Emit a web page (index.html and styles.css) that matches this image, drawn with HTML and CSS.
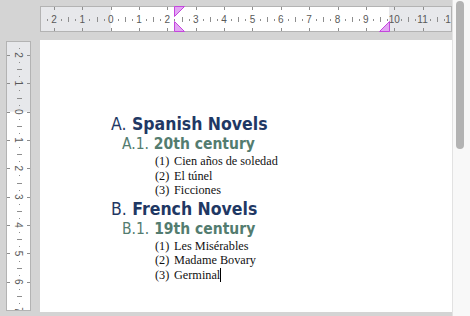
FILE: index.html
```html
<!DOCTYPE html>
<html>

<head>
  <meta charset="utf-8" />
  <title>Outline</title>
  <meta name="viewport" content="width=device-width, initial-scale=1">
  <link rel="stylesheet" href="styles.css">
</head>

<body>
  <section class="app">
    <section class="workspace">
      <div class="ruler ruler-top" id="hruler"></div>
      <div class="ruler ruler-left" id="vruler"></div>
      <article class="page">
        <h1 class="h1"><span class="num">A.</span> Spanish Novels</h1>
        <h2 class="h2"><span class="num">A.1.</span> 20th century</h2>
        <ul class="items">
          <li><span class="n">(1)</span>Cien años de soledad</li>
          <li><span class="n">(2)</span>El túnel</li>
          <li><span class="n">(3)</span>Ficciones</li>
        </ul>
        <h1 class="h1 next"><span class="num">B.</span> French Novels</h1>
        <h2 class="h2"><span class="num">B.1.</span> 19th century</h2>
        <ul class="items">
          <li><span class="n">(1)</span>Les Misérables</li>
          <li><span class="n">(2)</span>Madame Bovary</li>
          <li><span class="n">(3)</span>Germinal<span class="caret"></span></li>
        </ul>
      </article>
      <div class="hscroll"></div>
    </section>
    <aside class="vscroll"><div class="thumb"></div></aside>
  </section>
  <script>
    var $ = (selector, container = document) => container.querySelector(selector);
    (() => {
      const unit = 28.35, origin = 70.7;
      const px = v => Math.round(v) + .5;

      // one ruler, drawn along x; the left one is the same thing turned round
      const ruler = (length, depth, marginEnd, vertical) => {
        const at = (a, b) => vertical ? `x="${b}" y="${a}"` : `x="${a}" y="${b}"`;
        const line = (a, b1, b2) => vertical
          ? `<line x1="${b1}" x2="${b2}" y1="${a}" y2="${a}"/>`
          : `<line x1="${a}" x2="${a}" y1="${b1}" y2="${b2}"/>`;
        const rect = (a, len, fill) => vertical
          ? `<rect x="0" y="${a}" width="${depth}" height="${len}" fill="${fill}"/>`
          : `<rect x="${a}" y="0" width="${len}" height="${depth}" fill="${fill}"/>`;
        const mid = depth / 2;
        let ticks = '', nums = '';
        for (let k = -12; k <= 60; k++) {
          const pos = origin + k * unit / 4;
          if (pos < 1 || pos > length) continue;
          const p = px(pos);
          if (k % 4 === 0) {
            ticks += line(p, 0, 4) + line(p, depth - 4, depth);
            const label = Math.abs(k / 4);
            const c = vertical ? [mid, pos] : [pos, mid];
            const turn = vertical ? ` transform="rotate(90 ${c[0]} ${c[1]})"` : '';
            nums += `<text x="${c[0]}" y="${c[1]}"${turn}>${label}</text>`;
          } else if (Math.abs(k % 4) === 2) {
            ticks += line(p, mid - 2, mid + 3);
          } else {
            ticks += line(p, mid, mid + 1.5);
          }
        }
        const w = vertical ? depth : length, h = vertical ? length : depth;
        return `<svg width="${w}" height="${h}" viewBox="0 0 ${w} ${h}">
          ${rect(0, length, '#e7e8eb')}
          ${rect(origin, marginEnd - origin, '#fff')}
          <g class="ticks">${ticks}</g>
          <g class="nums">${nums}</g>
          <rect class="edge" x=".5" y=".5" width="${w - 1}" height="${h - 1}"/>
          ${vertical ? '' : `<g class="marker">
            <polygon points="134.5,.5 144.5,.5 134.5,10.5"/>
            <polygon points="134.5,15.5 134.5,25.5 144.5,25.5"/>
            <polygon points="349.5,15.5 349.5,25.5 339.5,25.5"/>
          </g>`}
        </svg>`;
      };

      $('#hruler').innerHTML = ruler(412, 26, 349, false);
      $('#vruler').innerHTML = ruler(270, 25, 270, true);
    })();
  </script>
</body>

</html>
```

FILE: styles.css
```css
* { box-sizing: border-box; margin: 0; padding: 0; }
html, body { height: 100%; }
body {
  background: #d4d4d4;
  overflow: hidden;
}
.app {
  display: flex;
  height: 316px;
}
.workspace {
  display: grid;
  grid-template-columns: 25px 412px;
  grid-template-rows: 26px 272px 4px;
  column-gap: 9px;
  row-gap: 8px;
  padding: 6px 0 0 6px;
  width: 452px;
}
.ruler svg { display: block; }
.ruler-top { grid-column: 2; grid-row: 1; }
.ruler-left { grid-column: 1; grid-row: 2; margin-top: 1px; }
.ticks line { stroke: #8e8e8e; stroke-width: 1; shape-rendering: crispEdges; }
.nums text {
  font: 10px "Liberation Sans", Arial, sans-serif;
  fill: #595959;
  text-anchor: middle;
  dominant-baseline: central;
}
.edge { fill: none; stroke: #b3b3b3; shape-rendering: crispEdges; }
.marker polygon { fill: #e2a6f3; stroke: #c446dd; stroke-width: 1; }
.page {
  grid-column: 2;
  grid-row: 2;
  background: #fff;
  padding: 74px 0 0 71px;
}
.hscroll {
  grid-column: 1 / 3;
  grid-row: 3;
  margin: -8px 0 0 -6px;
  height: 4px;
  align-self: end;
  background: #eaeaea;
}
.h1, .h2 {
  font-family: "DejaVu Sans Condensed", "DejaVu Sans", sans-serif;
  font-stretch: condensed;
  font-weight: bold;
}
.h1 {
  font-size: 17.5px;
  line-height: 21px;
  color: #1f3864;
}
.h1.next { margin-top: 1px; }
.h2 {
  font-size: 15.5px;
  line-height: 19px;
  color: #537c6f;
  padding-left: 11px;
}
.num { font-weight: normal; }
.items {
  list-style: none;
  padding-left: 44px;
  font: 12.25px/14.5px "Liberation Serif", "Times New Roman", serif;
  color: #111;
}
.items .n { display: inline-block; width: 19px; }
.caret {
  display: inline-block;
  width: 1px;
  height: 14px;
  margin-bottom: -3px;
  background: #000;
}
.vscroll {
  flex: 1;
  background: #f8f8f8;
  border-left: 1px solid #e2e2e2;
  padding: 1px 0 0 3px;
}
.thumb {
  width: 8px;
  height: 148px;
  border-radius: 4px;
  background: #b3b3b3;
}
```
